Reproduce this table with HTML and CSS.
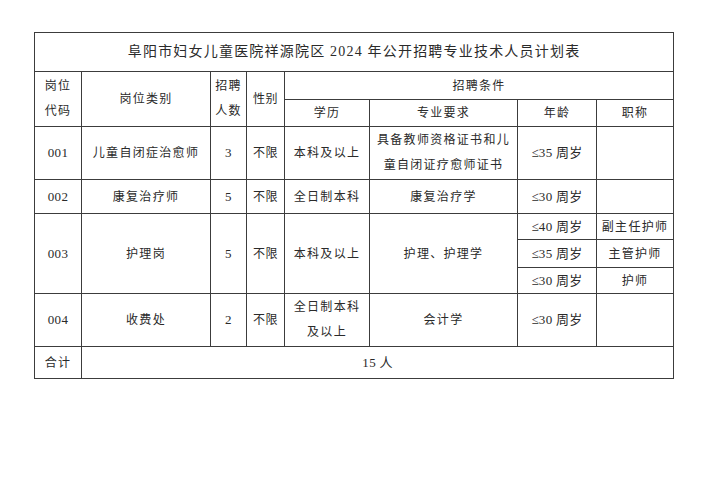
FILE: index.html
```html
<!DOCTYPE html>
<html lang="zh-CN">
<head>
<meta charset="utf-8">
<title>计划表</title>
<link rel="stylesheet" href="styles.css">
</head>
<body>
<table class="plan">
  <colgroup>
    <col class="c1"><col class="c2"><col class="c3"><col class="c4">
    <col class="c5"><col class="c6"><col class="c7"><col class="c8">
  </colgroup>
  <tr class="r-title"><td colspan="8" class="title">阜阳市妇女儿童医院祥源院区 2024 年公开招聘专业技术人员计划表</td></tr>
  <tr class="r-h1">
    <td rowspan="2" class="two">岗位<br>代码</td>
    <td rowspan="2">岗位类别</td>
    <td rowspan="2" class="two">招聘<br>人数</td>
    <td rowspan="2" class="tight">性别</td>
    <td colspan="4">招聘条件</td>
  </tr>
  <tr class="r-h2">
    <td>学历</td><td>专业要求</td><td>年龄</td><td>职称</td>
  </tr>
  <tr class="r-1">
    <td class="num">001</td>
    <td>儿童自闭症治愈师</td>
    <td class="num">3</td>
    <td class="tight">不限</td>
    <td>本科及以上</td>
    <td class="two">具备教师资格证书和儿<br>童自闭证疗愈师证书</td>
    <td class="age">≤35 周岁</td>
    <td></td>
  </tr>
  <tr class="r-2">
    <td class="num">002</td>
    <td>康复治疗师</td>
    <td class="num">5</td>
    <td class="tight">不限</td>
    <td>全日制本科</td>
    <td>康复治疗学</td>
    <td class="age">≤30 周岁</td>
    <td></td>
  </tr>
  <tr class="r-3a">
    <td rowspan="3" class="num">003</td>
    <td rowspan="3">护理岗</td>
    <td rowspan="3" class="num">5</td>
    <td rowspan="3" class="tight">不限</td>
    <td rowspan="3">本科及以上</td>
    <td rowspan="3">护理、护理学</td>
    <td class="age">≤40 周岁</td>
    <td>副主任护师</td>
  </tr>
  <tr class="r-3b">
    <td class="age">≤35 周岁</td>
    <td>主管护师</td>
  </tr>
  <tr class="r-3c">
    <td class="age">≤30 周岁</td>
    <td>护师</td>
  </tr>
  <tr class="r-4">
    <td class="num">004</td>
    <td>收费处</td>
    <td class="num">2</td>
    <td class="tight">不限</td>
    <td class="two">全日制本科<br>及以上</td>
    <td>会计学</td>
    <td class="age">≤30 周岁</td>
    <td></td>
  </tr>
  <tr class="r-total">
    <td>合计</td>
    <td colspan="7" class="num">15 人</td>
  </tr>
</table>
</body>
</html>
```
FILE: styles.css
```css
html, body {
  margin: 0;
  padding: 0;
  background: #ffffff;
}
body {
  padding: 32px 0 0 34px;
  font-family: "Liberation Serif", "Noto Sans CJK SC", serif;
  color: #2a2a2a;
}
.plan {
  border-collapse: collapse;
  table-layout: fixed;
  width: 639px;
}
.c1 { width: 47px; }
.c2 { width: 129px; }
.c3 { width: 36px; }
.c4 { width: 38px; }
.c5 { width: 85px; }
.c6 { width: 148px; }
.c7 { width: 79px; }
.c8 { width: 77px; }
.plan td {
  border: 1px solid #3c3c3c;
  padding: 0;
  text-align: center;
  vertical-align: middle;
  font-size: 12px;
  letter-spacing: 1.3px;
  line-height: 16px;
  white-space: nowrap;
}
.plan td.title {
  font-size: 14px;
  letter-spacing: 1.2px;
}
.plan td.two {
  line-height: 25px;
}
.plan td.tight {
  letter-spacing: 0.5px;
}
.plan td.num {
  font-size: 13px;
  letter-spacing: 0.3px;
}
.plan td.age {
  font-size: 13px;
  letter-spacing: 0.3px;
}
.r-title td { height: 38px; }
.r-h1 td { height: 27px; }
.r-h2 td { height: 26px; }
.r-1 td { height: 52px; }
.r-2 td { height: 33px; }
.r-3a td { height: 25px; }
.r-3b td { height: 27px; }
.r-3c td { height: 25px; }
.r-4 td { height: 52px; }
.r-total td { height: 31px; }
```
